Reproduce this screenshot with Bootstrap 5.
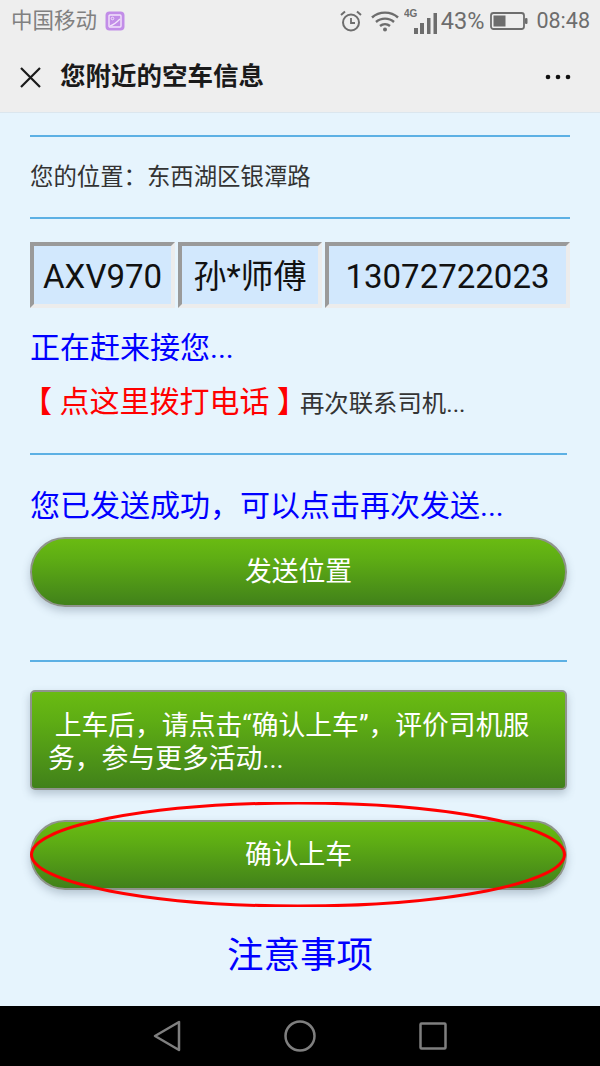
<!DOCTYPE html>
<html lang="zh-CN">
<head>
<meta charset="utf-8">
<title>您附近的空车信息</title>
<link rel="stylesheet" href="https://cdn.jsdelivr.net/npm/bootstrap@5.3.0/dist/css/bootstrap.min.css">
<style>
html,body{height:1066px;overflow:hidden}
body{width:600px;background:#e6f4fd;font-family:Roboto,"Noto Sans CJK SC",sans-serif;color:#333;display:flex;flex-direction:column}
.chrome-top{background:#eee;height:113px;border-bottom:1px solid #dbe6ee;flex:none}
.status-row{height:42px;padding:0 10px 0 11px;color:#6d6d6d}
.carrier{font-size:21.5px;color:#808080;line-height:42px}
.clock-text{font-size:21.5px;line-height:42px;color:#6d6d6d}
.pct-text{font-size:23.5px;line-height:42px;color:#6d6d6d;margin-left:3px;margin-right:6px}
.wifi-icon{margin-left:7px}
.bars-icon{margin-left:4px}
.title-row{height:70px;padding:0 29px 0 20px}
.page-title{font-size:25.5px;font-weight:700;color:#1a1a1a;margin-left:19px;line-height:1}
.main-area{flex:1 1 auto;padding:22px 33px 0 30px;min-height:0}
.rule-line{height:2px;background:#5cb0e4;border:0;margin:0;opacity:1}
.rule-wide{margin-right:-3px}
.loc-text{font-size:23.4px;line-height:34px;padding:23px 0 23px}
.info-row{display:flex;gap:3px;margin:23px -4px 0 0;height:66px}
.info-cell{display:flex;align-items:center;justify-content:center;background:#d2e8fd;border-style:solid;border-width:4px;border-color:#9a9a9a #ececec #ececec #9a9a9a;color:#111;font-size:33px;padding-top:3px}
.cell-a{width:145px}.cell-b{width:144px}.cell-c{width:245px}
.blue-msg{color:#00f;font-size:30px;line-height:40px}
.first-msg{margin-top:20px}
.call-line{display:flex;align-items:baseline;margin-top:14px;line-height:40px;white-space:nowrap}
.call-red{color:#f00;font-size:30px;margin-left:-8px}
.call-rest{font-size:24.4px;color:#333;margin-left:-7px}
.rule-call{margin-top:29px}
.second-msg{margin-top:31px}
.green-fill{background:linear-gradient(#6abb12 0%,#5ead14 30%,#41811a 100%);border:2px solid #8f948c;color:#fff;box-shadow:0 4px 9px rgba(70,90,110,.3)}
.pill-btn{display:flex;align-items:center;justify-content:center;width:100%;height:70px;border-radius:35px;font-size:26.8px;padding:1px 0 0}
.send-btn{margin-top:11px}
.rule-send{margin-top:53px}
.note-box{height:100px;border-radius:5px;font-size:26.8px;line-height:33px;padding:18px 16px 0 16px;margin-top:28px}
.note-link{color:#00f;font-size:36.5px;line-height:46px;text-align:center;margin-top:43px;margin-right:-3px}
.confirm-wrap{position:relative;margin-top:30px}
.red-ring{position:absolute;left:0;top:-18px;width:536px;height:105px;pointer-events:none}
.nav-strip{background:#000;height:60px;flex:none;display:flex;justify-content:center;align-items:center}
.nav-slot{width:133px;display:flex;justify-content:center}
</style>
</head>
<body>
<header class="chrome-top">
  <div class="status-row d-flex align-items-center">
    <span class="carrier">中国移动</span>
    <svg class="ms-2" width="20" height="20" viewBox="0 0 20 20"><rect x="0.5" y="0.5" width="19" height="19" rx="4" fill="#c28de8"/><rect x="4" y="4" width="12" height="12" rx="1" fill="none" stroke="#f2e3fb" stroke-width="1.4"/><circle cx="7.5" cy="7.5" r="1.3" fill="none" stroke="#f2e3fb"/><path d="M5 15C8 14 12 11 15 8" fill="none" stroke="#f2e3fb" stroke-width="1.3"/></svg>
    <span class="ms-auto d-flex align-items-center">
      <svg width="24" height="24" viewBox="0 0 24 24" fill="none" stroke="#6d6d6d"><circle cx="12" cy="13.5" r="8" stroke-width="2"/><path d="M12 9v5h4" stroke-width="1.8"/><path d="M2 6l4-3.5M22 6l-4-3.5" stroke-width="2"/></svg>
      <svg class="wifi-icon" width="30" height="24" viewBox="0 0 30 24" fill="none" stroke="#6d6d6d" stroke-width="2.4"><path d="M2 8.5C9 2 21 2 28 8.5"/><path d="M6 13c5-4.500 13-4.500 18 0"/><path d="M10 17c3-2.500 7-2.500 10 0"/><circle cx="15" cy="20.500" r="2" fill="#6d6d6d" stroke="none"/></svg>
      <svg class="bars-icon" width="34" height="26" viewBox="0 0 34 26"><text x="0" y="9" font-size="10" font-weight="700" font-family="Liberation Sans" fill="#6d6d6d">4G</text><g fill="#6d6d6d"><rect x="10" y="20" width="4" height="6"/><rect x="16" y="15" width="4" height="11"/><rect x="23" y="10" width="3.500" height="16"/><rect x="29.500" y="5" width="3.500" height="21"/></g></svg>
      <span class="pct-text">43%</span>
      <svg width="38" height="20" viewBox="0 0 38 20"><rect x="1" y="2" width="33" height="16" rx="2.500" fill="none" stroke="#6d6d6d" stroke-width="1.800"/><rect x="3.500" y="4.500" width="12" height="11" fill="#6d6d6d"/><rect x="35" y="7" width="2.500" height="6" rx="1" fill="#6d6d6d"/></svg>
      <span class="clock-text ms-2">08:48</span>
    </span>
  </div>
  <div class="title-row d-flex align-items-center">
    <svg width="21" height="21" viewBox="0 0 21 21" stroke="#1a1a1a" stroke-width="2.200"><path d="M1 1l19 19M20 1L1 20"/></svg>
    <span class="page-title">您附近的空车信息</span>
    <svg class="ms-auto" width="26" height="6" viewBox="0 0 26 6" fill="#111"><circle cx="3" cy="3" r="2.300"/><circle cx="13" cy="3" r="2.300"/><circle cx="23" cy="3" r="2.300"/></svg>
  </div>
</header>
<main class="main-area">
  <hr class="rule-line rule-wide">
  <div class="loc-text">您的位置：东西湖区银潭路</div>
  <hr class="rule-line rule-wide">
  <div class="info-row">
    <div class="info-cell cell-a">AXV970</div>
    <div class="info-cell cell-b">孙*师傅</div>
    <div class="info-cell cell-c">13072722023</div>
  </div>
  <div class="blue-msg first-msg">正在赶来接您...</div>
  <div class="call-line"><span class="call-red">【 点这里拨打电话 】</span><span class="call-rest">再次联系司机...</span></div>
  <hr class="rule-line rule-call">
  <div class="blue-msg second-msg">您已发送成功，可以点击再次发送...</div>
  <button type="button" class="btn green-fill pill-btn send-btn">发送位置</button>
  <hr class="rule-line rule-send">
  <div class="green-fill note-box">&nbsp;上车后，请点击“确认上车”，评价司机服务，参与更多活动...</div>
  <div class="confirm-wrap">
    <button type="button" class="btn green-fill pill-btn">确认上车</button>
    <svg class="red-ring" viewBox="0 0 536 105"><ellipse cx="268" cy="52.500" rx="266.500" ry="51.500" fill="none" stroke="#f00" stroke-width="3"/></svg>
  </div>
  <div class="note-link">注意事项</div>
</main>
<nav class="nav-strip">
  <div class="nav-slot"><svg width="28" height="32" viewBox="0 0 28 32" fill="none" stroke="#7f7f7f" stroke-width="2.500" stroke-linejoin="round"><path d="M26 2V30L2 16Z"/></svg></div>
  <div class="nav-slot"><svg width="32" height="32" viewBox="0 0 32 32" fill="none" stroke="#7f7f7f" stroke-width="2.500"><circle cx="16" cy="16" r="14.500"/></svg></div>
  <div class="nav-slot"><svg width="28" height="28" viewBox="0 0 28 28" fill="none" stroke="#7f7f7f" stroke-width="2.500" stroke-linejoin="round"><rect x="1.500" y="1.500" width="25" height="25" rx="1"/></svg></div>
</nav>
</body>
</html>
